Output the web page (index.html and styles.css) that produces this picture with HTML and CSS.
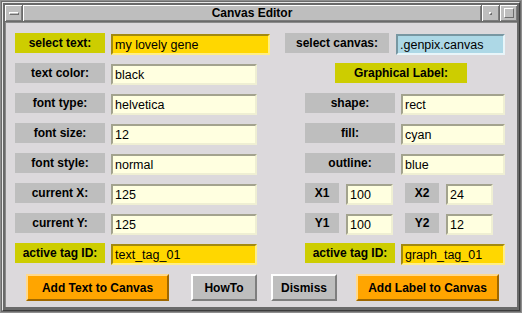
FILE: index.html
```html
<!DOCTYPE html>
<html lang="en">
<head>
  <meta charset="UTF-8">
  <title>Canvas Editor</title>
  <link rel="stylesheet" href="styles.css">
</head>
<body>
  <div class="window">
    <div class="frame">
      <div class="titlebar">
        <div class="wm-btn"><span class="menu-bar"></span></div>
        <div class="wm-title">Canvas Editor</div>
        <div class="wm-btn"><span class="min-dot"></span></div>
        <div class="wm-btn"><span class="max-box"></span></div>
      </div>

      <div class="content">
        <div class="form">
          <div class="cell">
            <span class="lbl hl">select text:</span>
            <input class="entry gold wide" value="my lovely gene">
          </div>
          <div class="cell canvas">
            <span class="lbl canvas-lbl">select canvas:</span>
            <input class="entry blue canvas-entry" value=".genpix.canvas">
          </div>

          <div class="cell">
            <span class="lbl">text color:</span>
            <input class="entry" value="black">
          </div>
          <div class="cell center">
            <span class="lbl hl title-lbl">Graphical Label:</span>
          </div>

          <div class="cell">
            <span class="lbl">font type:</span>
            <input class="entry" value="helvetica">
          </div>
          <div class="cell right">
            <span class="lbl">shape:</span>
            <input class="entry short" value="rect">
          </div>

          <div class="cell">
            <span class="lbl">font size:</span>
            <input class="entry" value="12">
          </div>
          <div class="cell right">
            <span class="lbl">fill:</span>
            <input class="entry short" value="cyan">
          </div>

          <div class="cell">
            <span class="lbl">font style:</span>
            <input class="entry" value="normal">
          </div>
          <div class="cell right">
            <span class="lbl">outline:</span>
            <input class="entry short" value="blue">
          </div>

          <div class="cell">
            <span class="lbl">current X:</span>
            <input class="entry" value="125">
          </div>
          <div class="cell right coords">
            <span class="lbl coord">X1</span>
            <input class="entry num" value="100">
            <span class="lbl coord second">X2</span>
            <input class="entry num" value="24">
          </div>

          <div class="cell">
            <span class="lbl">current Y:</span>
            <input class="entry" value="125">
          </div>
          <div class="cell right coords">
            <span class="lbl coord">Y1</span>
            <input class="entry num" value="100">
            <span class="lbl coord second">Y2</span>
            <input class="entry num" value="12">
          </div>

          <div class="cell">
            <span class="lbl hl">active tag ID:</span>
            <input class="entry gold" value="text_tag_01">
          </div>
          <div class="cell right">
            <span class="lbl hl">active tag ID:</span>
            <input class="entry gold short" value="graph_tag_01">
          </div>
        </div>

        <div class="buttons">
          <button class="btn orange add-text">Add Text to Canvas</button>
          <button class="btn gray howto">HowTo</button>
          <button class="btn gray dismiss">Dismiss</button>
          <button class="btn orange add-label">Add Label to Canvas</button>
        </div>
      </div>
    </div>
  </div>
</body>
</html>
```

FILE: styles.css
```css
* {
  box-sizing: border-box;
}
body {
  margin: 0;
  font-family: "Liberation Sans", Arial, sans-serif;
  background: #6a6a6a;
}
.window {
  width: 522px;
  height: 313px;
  background: #6a6a6a;
  border: 1px solid #8e8e8e;
  padding: 1px;
}
.frame {
  height: 100%;
  border-top: 1px solid #e8e8e8;
  border-left: 1px solid #e8e8e8;
  border-right: 1px solid #3c3c3c;
  border-bottom: 1px solid #3c3c3c;
  padding: 2px 2px 3px 2px;
  display: flex;
  flex-direction: column;
}
.titlebar {
  display: flex;
  gap: 1px;
  height: 16px;
  margin-bottom: 1px;
}
.wm-btn, .wm-title {
  background: #bebebe;
  box-shadow: inset 1px 1px 0 #fff, inset -1px -1px 0 #7c7c7c;
}
.wm-btn {
  width: 17px;
  display: flex;
  align-items: center;
  justify-content: center;
}
.wm-title {
  flex: 1;
  text-align: center;
  font-size: 12px;
  font-weight: bold;
  line-height: 16px;
  color: #000;
}
.menu-bar {
  width: 10px;
  height: 3px;
  border-top: 1px solid #fff;
  border-left: 1px solid #fff;
  border-bottom: 1px solid #6e6e6e;
  border-right: 1px solid #6e6e6e;
}
.min-dot {
  width: 3px;
  height: 3px;
  border-top: 1px solid #fff;
  border-left: 1px solid #fff;
  border-bottom: 1px solid #6e6e6e;
  border-right: 1px solid #6e6e6e;
}
.max-box {
  width: 10px;
  height: 10px;
  border-top: 1px solid #fff;
  border-left: 1px solid #fff;
  border-bottom: 1px solid #6e6e6e;
  border-right: 1px solid #6e6e6e;
}
.content {
  flex: 1;
  background: #dcd9dc;
  padding: 11px 0 0 10px;
  box-shadow: inset 1px 1px 0 #8a8a8a;
}
.form {
  display: grid;
  grid-template-columns: 270px 1fr;
  grid-auto-rows: 22px;
  row-gap: 8px;
}
.cell {
  display: flex;
  align-items: flex-start;
  gap: 6px;
}
.cell.right {
  padding-left: 20px;
}
.cell.canvas {
  gap: 7px;
}
.cell.center {
  justify-content: center;
}
.cell.coords {
  gap: 7px;
}
.lbl {
  width: 90px;
  height: 20px;
  display: flex;
  align-items: center;
  justify-content: center;
  background: #bebebe;
  color: #000;
  font-size: 12px;
  font-weight: bold;
  white-space: nowrap;
}
.lbl.hl {
  background: #cdcd00;
}
.canvas-lbl {
  width: 104px;
}
.title-lbl {
  width: 132px;
}
.lbl.coord {
  width: 34px;
}
.lbl.second {
  margin-left: 5px;
}
.entry {
  margin: 1px 0 0 0;
  width: 146px;
  height: 21px;
  padding: 0 2px;
  border: 2px solid;
  border-color: #a3a38e #efefd3 #efefd3 #a3a38e;
  background: #ffffe0;
  color: #000;
  font-family: "Liberation Sans", Arial, sans-serif;
  font-size: 12.5px;
  outline: none;
}
.entry.wide {
  width: 159px;
}
.entry.short {
  width: 104px;
}
.entry.num {
  width: 47px;
}
.entry.canvas-entry {
  width: 109px;
}
.entry.gold {
  background: #ffd700;
  border-color: #a38a10 #ffee85 #ffee85 #a38a10;
}
.entry.blue {
  background: #add8e6;
  border-color: #7897a2 #e8f5f9 #e8f5f9 #7897a2;
}
.buttons {
  display: flex;
  margin-top: 9px;
  padding-left: 11px;
}
.btn {
  height: 27px;
  padding: 0;
  border: 2px solid;
  font-family: "Liberation Sans", Arial, sans-serif;
  font-size: 12px;
  font-weight: bold;
  color: #000;
  cursor: pointer;
}
.btn.orange {
  width: 143px;
  background: #ffa500;
  border-color: #ffd98c #a06800 #a06800 #ffd98c;
}
.btn.gray {
  width: 66px;
  background: #bebebe;
  border-color: #fff #7e7e7e #7e7e7e #fff;
}
.howto {
  margin-left: 22px;
}
.dismiss {
  margin-left: 14px;
}
.add-label {
  margin-left: 19px;
}
```
